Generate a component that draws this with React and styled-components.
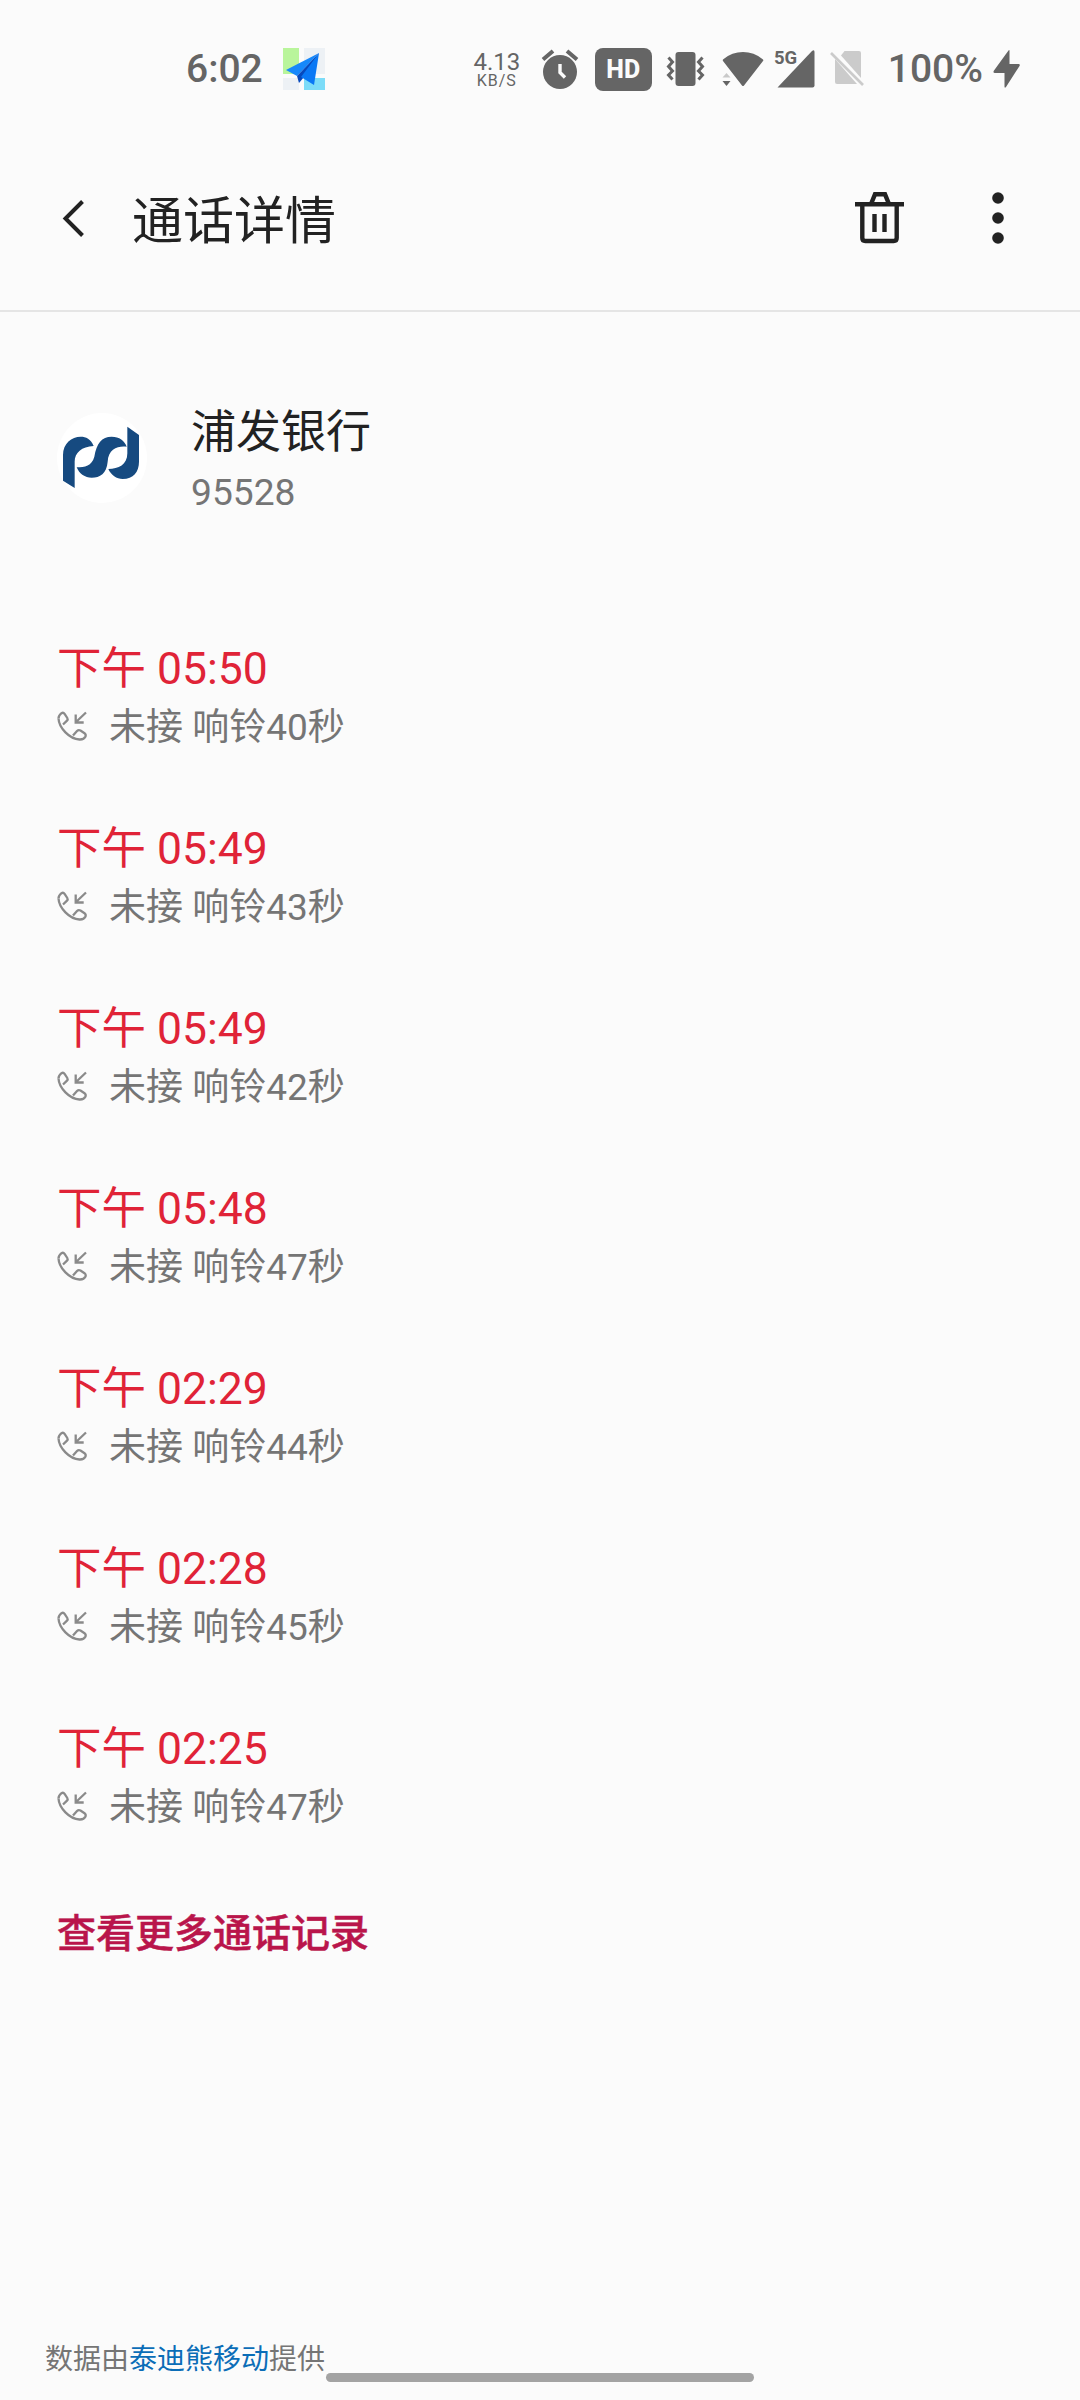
import styled, {createGlobalStyle} from 'styled-components';

const GlobalStyle = createGlobalStyle`
    * {
        box-sizing: border-box;
    }

    body {
        margin: 0;
        background-color: #fbfbfb;
        font-family: Roboto, "Noto Sans CJK SC", sans-serif;
    }
`;

const Screen = styled.div`
    width: 1080px;
    height: 2400px;
    display: flex;
    flex-direction: column;
    overflow: hidden;
    background-color: #fbfbfb;
`;

const Icon = styled.svg`
    display: block;
    flex: none;
    overflow: visible;
    margin-left: ${({$gap}) => $gap || 0}px;
    margin-bottom: ${({$lift}) => $lift || 0}px;
`;

const StatusBar = styled.header`
    height: 138px;
    display: flex;
    align-items: center;
    justify-content: space-between;
    padding: 0 60px 0 186px;
    color: #656565;
    fill: #656565;
`;

const StatusGroup = styled.div`
    display: flex;
    align-items: center;
`;

const StatusText = styled.span`
    font-size: 39px;
    line-height: 46px;
    font-weight: 500;
    margin-left: ${({$gap}) => $gap || 0}px;
`;

const Speed = styled.div`
    width: 46px;
    display: flex;
    flex-direction: column;
    align-items: center;
    padding-top: 2px;
    font-size: 24px;
    line-height: 22px;
`;

const SpeedUnit = styled.span`
    font-size: 16px;
    line-height: 16px;
    letter-spacing: 1px;
`;

const HdBadge = styled.span`
    width: 57px;
    height: 43px;
    margin-left: 16px;
    border-radius: 8px;
    background-color: #656565;
    color: #fbfbfb;
    font-size: 25px;
    line-height: 43px;
    font-weight: 800;
    text-align: center;
`;

const TitleBar = styled.nav`
    height: 174px;
    display: flex;
    align-items: center;
    padding: 0 76px 11px 63px;
    border-bottom: 2px solid #e5e5e5;
`;

const Title = styled.h1`
    flex: 1;
    margin: 0 0 0 48px;
    padding-top: 7px;
    color: #222;
    font-size: 51px;
    line-height: 70px;
    font-weight: 400;
`;

const Contact = styled.section`
    height: 327px;
    display: flex;
    align-items: flex-start;
    padding: 89px 57px 0;
`;

const Avatar = styled.div`
    width: 90px;
    height: 90px;
    margin-top: 12px;
    border-radius: 50%;
    background-color: #fff;
`;

const ContactInfo = styled.div`
    margin-left: 44px;
`;

const ContactName = styled.h2`
    margin: 0;
    color: #222;
    font-size: 45px;
    line-height: 64px;
    font-weight: 400;
`;

const ContactNumber = styled.p`
    margin: 2px 0 0;
    color: #757575;
    font-size: 37.2px;
    line-height: 50px;
`;

const CallList = styled.ul`
    margin: 0;
    padding: 0 57px;
    list-style: none;
`;

const CallItem = styled.li`
    height: 180px;
`;

const CallTime = styled.p`
    margin: 0;
    color: #e02337;
    font-size: 44.5px;
    line-height: 60px;
`;

const CallDetail = styled.p`
    display: flex;
    align-items: center;
    gap: 22px;
    margin: 3px 0 0;
    color: #757575;
    font-size: 37px;
    line-height: 51px;
`;

const MoreLink = styled.a`
    margin: 5px 57px 0;
    color: #b9154b;
    font-size: 39px;
    line-height: 60px;
    font-weight: 500;
    -webkit-text-stroke: 0.5px #b9154b;
`;

const Footer = styled.footer`
    margin-top: auto;
    height: 70px;
    padding: 17px 45px 0;
    color: #757575;
    font-size: 28px;
    line-height: 26px;
`;

const Provider = styled.a`
    color: #0b6db7;
`;

const HomeBar = styled.div`
    width: 428px;
    height: 9px;
    margin: 0 auto;
    border-radius: 5px;
    background-color: #a3a3a3;
`;

const calls = [
    {id: 1, time: '05:50', seconds: 40},
    {id: 2, time: '05:49', seconds: 43},
    {id: 3, time: '05:49', seconds: 42},
    {id: 4, time: '05:48', seconds: 47},
    {id: 5, time: '02:29', seconds: 44},
    {id: 6, time: '02:28', seconds: 45},
    {id: 7, time: '02:25', seconds: 47},
];

const PlaneIcon = () => (
    <Icon $gap={20} width="42" height="42" viewBox="0 0 42 42">
        <path fill="#b9f59b" d="M0 0h16v26H0z" />
        <path fill="#edf1f5" d="M21 0h21v26H21zM0 30h16v12H0z" />
        <path fill="#7cdcf8" d="M21 30h21v12H21z" />
        <path fill="#1688fb" d="M36 5L3 22l11 6z" />
        <path fill="#0649bd" d="M36 5L14 28l2 7 5-6z" />
        <path fill="#0a78f5" d="M36 5L18 29l13 8z" />
    </Icon>
);

const AlarmIcon = () => (
    <Icon $gap={21} width="38" height="40" viewBox="0 0 38 40">
        <circle cx="19" cy="23" r="17" />
        <path d="M2 10.5L12 2M36 10.5L26 2" fill="none" stroke="#656565" strokeWidth="4" />
        <path d="M19 15v8.5l5 5" fill="none" stroke="#fbfbfb" strokeWidth="3.4" />
    </Icon>
);

const VibrateIcon = () => (
    <Icon $gap={15} width="37" height="34" viewBox="0 0 37 34">
        <rect x="8.5" width="20" height="34" rx="3" />
        <path
            d="M1.5 5.5l4 4.5-4 4.5 4 4.5-4 4 4 4.5M35.5 5.5l-4 4.5 4 4.5-4 4.5 4 4-4 4.5"
            fill="none"
            stroke="#656565"
            strokeWidth="3"
        />
    </Icon>
);

const WifiIcon = () => (
    <Icon $gap={18} width="42" height="35" viewBox="0 0 42 35">
        <path d="M1 9Q.2 8 1.3 7.2Q10 0 21 0T40.7 7.2Q41.8 8 41 9L22 33.5Q21 34.5 20 33.5z" />
        <path fill="#c9c9c9" d="M.5 25.5l4-4.5 4 4.5z" />
        <path d="M.5 29h8l-4 5z" />
    </Icon>
);

const SignalIcon = () => (
    <Icon $gap={11} width="40" height="38" viewBox="0 0 40 38">
        <path d="M2.5 37.5L37 1Q39.5-1 39.5 2V35.5Q39.5 37.5 37.5 37.5z" />
        <text x="-1" y="14" fontSize="18.5" fontWeight="700">5G</text>
    </Icon>
);

const NoSimIcon = () => (
    <Icon $gap={15} width="34" height="36" viewBox="0 0 34 36">
        <path fill="#cbcbcb" d="M11 4.5L14.500 0H29q2 0 2 2v25z" />
        <path fill="#cbcbcb" d="M5 8v23q0 2 2 2h20z" />
        <path d="M1 2l32 32" stroke="#cbcbcb" strokeWidth="2.6" />
    </Icon>
);

const BoltIcon = () => (
    <Icon $gap={10} width="27" height="38" viewBox="0 0 27 38">
        <path d="M15.5.5Q16.5-.5 16.5 1V14H25.5Q27.5 14 26.5 16L13 37Q11.5 38.5 11.5 36.5V23H2Q-.5 23 1 20.5z" />
    </Icon>
);

const BackIcon = () => (
    <Icon width="21" height="37" viewBox="0 0 21 37" fill="none" stroke="#222" strokeWidth="4">
        <path d="M19.5 1.5L2.5 18.5l17 17" />
    </Icon>
);

const TrashIcon = () => (
    <Icon $lift={2} width="49" height="52" viewBox="0 0 49 52" fill="none" stroke="#222" strokeWidth="4.4">
        <path d="M0 12.3h49M16 12l4-9.7h10L34 12M7.3 13v33q0 3 3 3h28.4q3 0 3-3V13M19.5 22v18M29.5 22v18" />
    </Icon>
);

const DotsIcon = () => (
    <Icon $gap={88} $lift={1} width="12" height="52" viewBox="0 0 12 52" fill="#222">
        <circle cx="6" cy="6" r="5.8" />
        <circle cx="6" cy="26" r="5.8" />
        <circle cx="6" cy="46" r="5.8" />
    </Icon>
);

const BankLogo = () => (
    <Icon width="90" height="90" viewBox="51 69 270 270" fill="#164a80">
        <path d="M69 272V195C69 160 95 140 122 140C138 140 152 146 161 168C125 170 104 188 104 215V294z" />
        <path d="M110 232C135 232 155 228 163 200C170 160 185 140 215 140C238 140 254 152 260 170C235 167 205 175 203 215C200 250 180 263 155 263C135 263 118 252 110 232z" />
        <path d="M262 110L297 135V215C297 245 280 267 248 267C230 267 213 255 205 237C235 237 262 225 262 190z" />
    </Icon>
);

const MissedIcon = () => (
    <Icon $lift={4} width="30" height="30" viewBox="0 0 30 30" fill="none" stroke="#8a8a8a" strokeWidth="2.3">
        <path d="M1.5 7.500Q1.500 4.500 4.500 2.200Q6.300 1 7.600 2.800L10.300 7Q11.200 8.500 10 9.700L6 13.500" />
        <path d="M1.500 7.500C2 17 12.500 28 22.500 28.500Q27 28.700 28.500 25.500Q29.200 23.500 27.500 22.200L23.500 19.500Q21.500 18.500 20 20L16 24.500" />
        <path d="M29 1.500L19 11M18.700 3.500V11.500H26.700" />
    </Icon>
);

const App = () => {
    return (
        <>
            <GlobalStyle />
            <Screen>
                <StatusBar>
                    <StatusGroup>
                        <StatusText>6:02</StatusText>
                        <PlaneIcon />
                    </StatusGroup>
                    <StatusGroup>
                        <Speed>
                            4.13
                            <SpeedUnit>KB/S</SpeedUnit>
                        </Speed>
                        <AlarmIcon />
                        <HdBadge>HD</HdBadge>
                        <VibrateIcon />
                        <WifiIcon />
                        <SignalIcon />
                        <NoSimIcon />
                        <StatusText $gap={24}>100%</StatusText>
                        <BoltIcon />
                    </StatusGroup>
                </StatusBar>
                <TitleBar>
                    <BackIcon />
                    <Title>通话详情</Title>
                    <TrashIcon />
                    <DotsIcon />
                </TitleBar>
                <Contact>
                    <Avatar>
                        <BankLogo />
                    </Avatar>
                    <ContactInfo>
                        <ContactName>浦发银行</ContactName>
                        <ContactNumber>95528</ContactNumber>
                    </ContactInfo>
                </Contact>
                <CallList>
                    {calls.map(({id, time, seconds}) => (
                        <CallItem key={id}>
                            <CallTime>下午 {time}</CallTime>
                            <CallDetail>
                                <MissedIcon />
                                <span>未接 响铃{seconds}秒</span>
                            </CallDetail>
                        </CallItem>
                    ))}
                </CallList>
                <MoreLink>查看更多通话记录</MoreLink>
                <Footer>
                    数据由<Provider>泰迪熊移动</Provider>提供
                    <HomeBar />
                </Footer>
            </Screen>
        </>
    );
}

export default App;
